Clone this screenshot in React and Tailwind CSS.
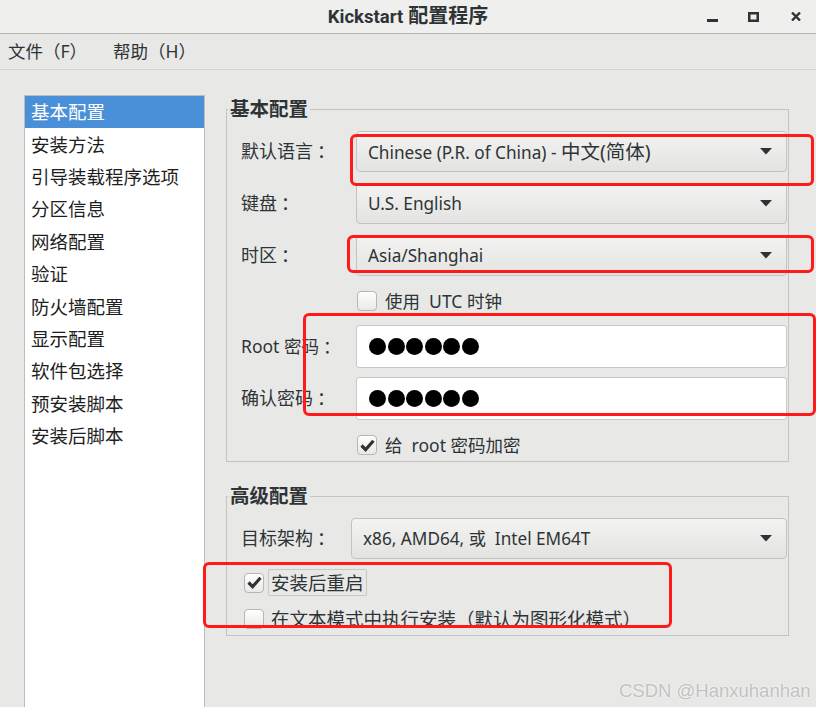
import React from "react";

function Arrow() {
  return (
    <svg width="12" height="7" viewBox="0 0 12 7">
      <path d="M0 0h12L6 6.5z" fill="#2e3436" />
    </svg>
  );
}

function Combo({ children }) {
  return (
    <div className="flex h-[41px] flex-1 items-center justify-between rounded-[4px] border border-[#c3c3c1] bg-gradient-to-b from-[#f3f3f2] to-[#e3e3e1] pl-[11px] pr-[14px] text-[17.2px] text-[#2e3436]">
      <span>{children}</span>
      <Arrow />
    </div>
  );
}

function Check({ checked }) {
  return (
    <div className="flex h-[20px] w-[20px] shrink-0 items-center justify-center rounded-[4px] border border-[#b6b6b3] bg-gradient-to-b from-white to-[#e9e9e7]">
      {checked && (
        <svg width="15" height="13" viewBox="0 0 15 13">
          <path d="M1.5 6.5 L5.6 10.6 L13.5 1.8" stroke="#2e3436" strokeWidth="3.2" fill="none" />
        </svg>
      )}
    </div>
  );
}

function Pwd() {
  return (
    <div className="flex h-[43px] flex-1 items-center gap-[1.6px] rounded-[3px] border border-[#c8c8c6] bg-white pl-[12px]">
      {[0, 1, 2, 3, 4, 5].map((i) => (
        <span key={i} className="h-[17px] w-[17px] rounded-full bg-black" />
      ))}
    </div>
  );
}

function Label({ text, w }) {
  return (
    <span className={w === 110 ? "w-[110px] text-[18px]" : "w-[115px] text-[18px]"}>
      {text}
      <span className="ml-[4px]">：</span>
    </span>
  );
}

const items = [
  "基本配置",
  "安装方法",
  "引导装载程序选项",
  "分区信息",
  "网络配置",
  "验证",
  "防火墙配置",
  "显示配置",
  "软件包选择",
  "预安装脚本",
  "安装后脚本",
];

export default function App() {
  return (
    <div className="relative h-[707px] w-[825px] overflow-hidden bg-white font-['Noto_Sans','Noto_Sans_CJK_SC',sans-serif] text-[#2e3436]">
      <div className="flex h-full w-[816px] flex-col bg-[#e8e8e7]">
        {/* title bar */}
        <div className="grid h-[34px] shrink-0 grid-cols-[1fr_auto_1fr] items-center border-b border-[#b4b4b1] bg-[#efefee]">
          <div />
          <span className="font-['Roboto','Noto_Sans_CJK_SC',sans-serif] font-bold text-[#2e3436]">
            <span className="text-[18.5px]">Kickstart</span>
            <span className="ml-[5px] text-[20px]">配置程序</span>
          </span>
          <div className="flex items-center justify-end pr-[15px]">
            <svg width="11" height="4" viewBox="0 0 11 4" className="mt-[8px]">
              <rect x="0" y="0" width="11" height="3" fill="#2e3436" />
            </svg>
            <svg width="11" height="10" viewBox="0 0 11 10" className="ml-[30px]">
              <rect x="1.25" y="1.25" width="8.5" height="7.5" fill="none" stroke="#2e3436" strokeWidth="2.5" />
            </svg>
            <svg width="10" height="9" viewBox="0 0 10 9" className="ml-[32px]">
              <path d="M1 0.5 L9 8.5 M9 0.5 L1 8.5" stroke="#2e3436" strokeWidth="2.4" />
            </svg>
          </div>
        </div>
        {/* menu bar */}
        <div className="flex h-[36px] shrink-0 items-center border-b border-[#d2d2d0] pl-[8px] text-[17.5px]">
          <span>文件（F）</span>
          <span className="ml-[26px]">帮助（H）</span>
        </div>
        {/* body */}
        <div className="flex flex-1">
          <div className="ml-[24px] mt-[25px] w-[181px] shrink-0 border border-b-0 border-[#bdbdbb] bg-white">
            {items.map((t, i) => (
              <div
                key={t}
                className={
                  i === 0
                    ? "flex h-[32.4px] items-center bg-[#4a90d9] pl-[6px] text-[18.5px] text-white"
                    : "flex h-[32.4px] items-center pl-[6px] text-[18.5px] text-[#1e1e1e]"
                }
              >
                {t}
              </div>
            ))}
          </div>
          <div className="ml-[21px] flex w-[563px] flex-col">
            <fieldset className="mt-[27px] border border-[#c4c4c2] pb-[6px] pl-[14px] pr-[1px] pt-[10px]">
              <legend className="-ml-[13px] px-[2px] text-[19.5px] font-bold leading-[24px] text-[#2e3436]">基本配置</legend>
              <div className="flex flex-col gap-[11px]">
                <div className="flex items-center">
                  <Label text="默认语言" />
                  <Combo>
                    Chinese (P.R. of China) - <span className="text-[19.5px]">中文(简体)</span>
                  </Combo>
                </div>
                <div className="flex items-center">
                  <Label text="键盘" />
                  <Combo>U.S. English</Combo>
                </div>
                <div className="flex items-center">
                  <Label text="时区" />
                  <Combo>Asia/Shanghai</Combo>
                </div>
              </div>
              <div className="mt-[15px] flex h-[20px] items-center gap-[8px] pl-[116px] text-[17.5px]">
                <Check />
                <span>使用&nbsp; UTC 时钟</span>
              </div>
              <div className="mt-[14px] flex items-center">
                <span className="w-[115px] text-[17.5px]">
                  Root 密码<span className="ml-[4px]">：</span>
                </span>
                <Pwd />
              </div>
              <div className="mt-[9px] flex items-center">
                <Label text="确认密码" />
                <Pwd />
              </div>
              <div className="mt-[15px] flex h-[20px] items-center gap-[8px] pl-[116px] text-[17.5px]">
                <Check checked />
                <span>给&nbsp; root 密码加密</span>
              </div>
            </fieldset>
            <fieldset className="mt-[22px] border border-[#c4c4c2] pb-[6px] pl-[14px] pr-[1px] pt-[10px]">
              <legend className="-ml-[13px] px-[2px] text-[19.5px] font-bold leading-[24px] text-[#2e3436]">高级配置</legend>
              <div className="flex items-center">
                <Label text="目标架构" w={110} />
                <Combo>x86, AMD64, 或&nbsp; Intel EM64T</Combo>
              </div>
              <div className="mt-[10px] flex h-[27px] items-center gap-[4px] pl-[3px]">
                <Check checked />
                <span className="flex h-[27px] items-center rounded-[2px] border border-[#c9c9c7] px-[2px] text-[18.5px]">安装后重启</span>
              </div>
              <div className="mt-[13px] flex h-[20px] items-center gap-[7px] pl-[3px]">
                <Check />
                <span className="text-[18.5px]">在文本模式中执行安装（默认为图形化模式）</span>
              </div>
            </fieldset>
          </div>
        </div>
      </div>

      {/* red annotation boxes */}
      <div className="absolute left-[350px] top-[134px] h-[52px] w-[464px] rounded-[6px] border-[3px] border-[#ff1a1a]" />
      <div className="absolute left-[347px] top-[235px] h-[38px] w-[467px] rounded-[6px] border-[3px] border-[#ff1a1a]" />
      <div className="absolute left-[303px] top-[313px] h-[103px] w-[513px] rounded-[6px] border-[3px] border-[#ff1a1a]" />
      <div className="absolute left-[203px] top-[562px] h-[66px] w-[469px] rounded-[6px] border-[3px] border-[#ff1a1a]" />

      {/* watermark */}
      <div className="absolute left-[619px] top-[677px] font-['Liberation_Sans',sans-serif] text-[18.5px] text-[#c2c2c2] [text-shadow:0_0_2px_#ffffff]">
        CSDN @Hanxuhanhan
      </div>
    </div>
  );
}
